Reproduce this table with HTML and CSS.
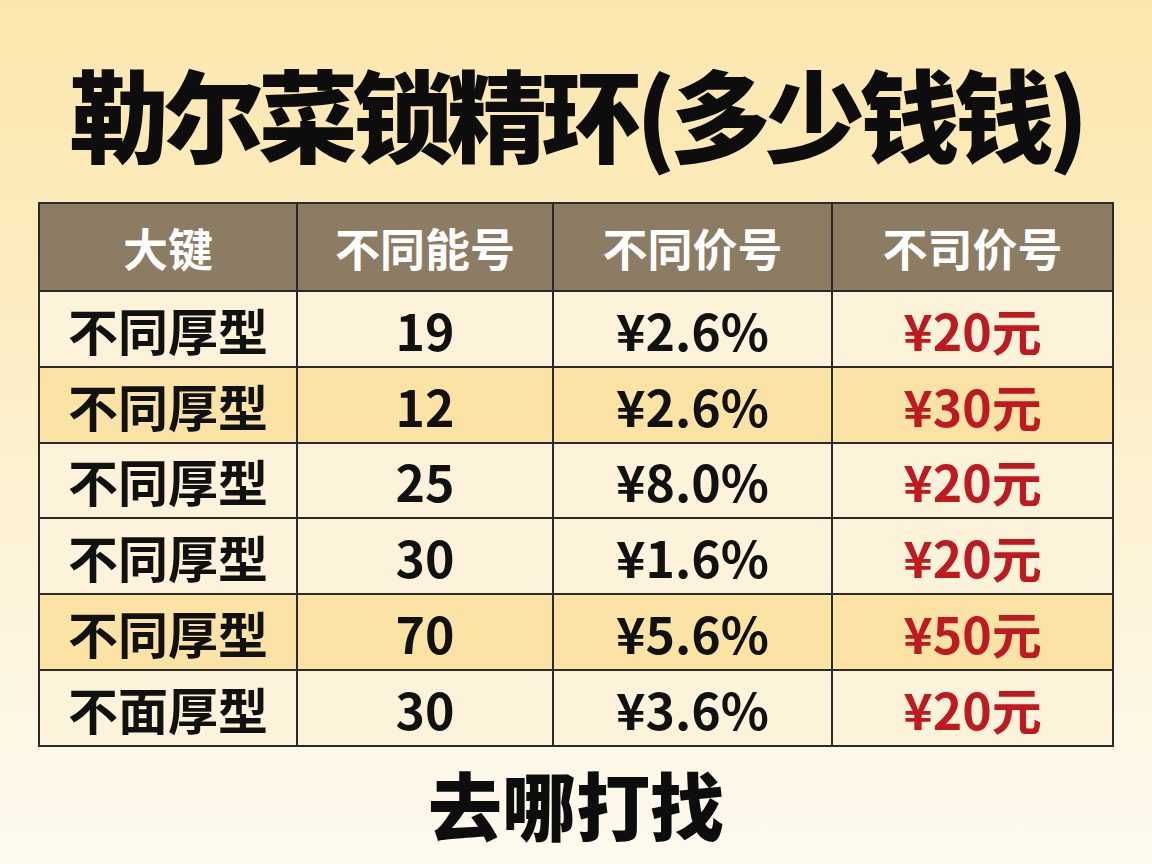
FILE: index.html
```html
<!DOCTYPE html>
<html lang="zh-CN">
<head>
<meta charset="utf-8">
<title>勒尔菜锁精环(多少钱钱)</title>
<link rel="stylesheet" href="styles.css">
</head>
<body>
<main class="page">
  <h1 class="title">勒尔菜锁精环(多少钱钱)</h1>
  <table class="price-table">
    <colgroup>
      <col class="c1"><col class="c2"><col class="c3"><col class="c4">
    </colgroup>
    <thead>
      <tr><th>大键</th><th>不同能号</th><th>不同价号</th><th>不司价号</th></tr>
    </thead>
    <tbody>
      <tr class="light"><td>不同厚型</td><td>19</td><td>¥2.6%</td><td class="red">¥20元</td></tr>
      <tr class="gold"><td>不同厚型</td><td>12</td><td>¥2.6%</td><td class="red">¥30元</td></tr>
      <tr class="light"><td>不同厚型</td><td>25</td><td>¥8.0%</td><td class="red">¥20元</td></tr>
      <tr class="light"><td>不同厚型</td><td>30</td><td>¥1.6%</td><td class="red">¥20元</td></tr>
      <tr class="gold"><td>不同厚型</td><td>70</td><td>¥5.6%</td><td class="red">¥50元</td></tr>
      <tr class="light"><td>不面厚型</td><td>30</td><td>¥3.6%</td><td class="red">¥20元</td></tr>
    </tbody>
  </table>
  <p class="footer">去哪打找</p>
</main>
</body>
</html>
```
FILE: styles.css
```css
html, body {
  margin: 0;
  padding: 0;
}
body {
  width: 1152px;
  height: 864px;
  overflow: hidden;
  background: linear-gradient(180deg, #fbe7ae 0%, #fcecc0 35%, #fdf4dc 70%, #fdf9ef 100%);
  font-family: "Noto Sans CJK SC", "Noto Sans", sans-serif;
  color: #111;
}
.page {
  height: 864px;
  box-sizing: border-box;
  padding-top: 62px;
  display: flex;
  flex-direction: column;
  align-items: center;
}
.title {
  margin: 0;
  font-size: 100px;
  line-height: 100px;
  font-weight: 900;
  letter-spacing: -5.5px;
  color: #0d0d0d;
  white-space: nowrap;
}
.price-table {
  margin-top: 40px;
  border-collapse: collapse;
  border: 2px solid #2a2a2a;
  width: 1074px;
  table-layout: fixed;
}
.c1 { width: 258px; }
.c2 { width: 256px; }
.c3 { width: 279px; }
.c4 { width: 281px; }
.price-table th,
.price-table td {
  border: 2px solid #2a2a2a;
  text-align: center;
  padding: 0;
  white-space: nowrap;
}
.price-table th {
  height: 86px;
  background: #8d7c64;
  color: #fff;
  font-size: 45px;
  font-weight: 700;
}
.price-table td {
  height: 73.8px;
  font-size: 50px;
  font-weight: 700;
  color: #111;
}
.light td { background: #fdf3da; }
.gold td { background: #fbe3a6; }
.price-table td.red { color: #bf1a1f; }
.footer {
  margin: 16px 0 0;
  font-size: 74px;
  line-height: 80px;
  font-weight: 900;
  color: #0d0d0d;
}
```
